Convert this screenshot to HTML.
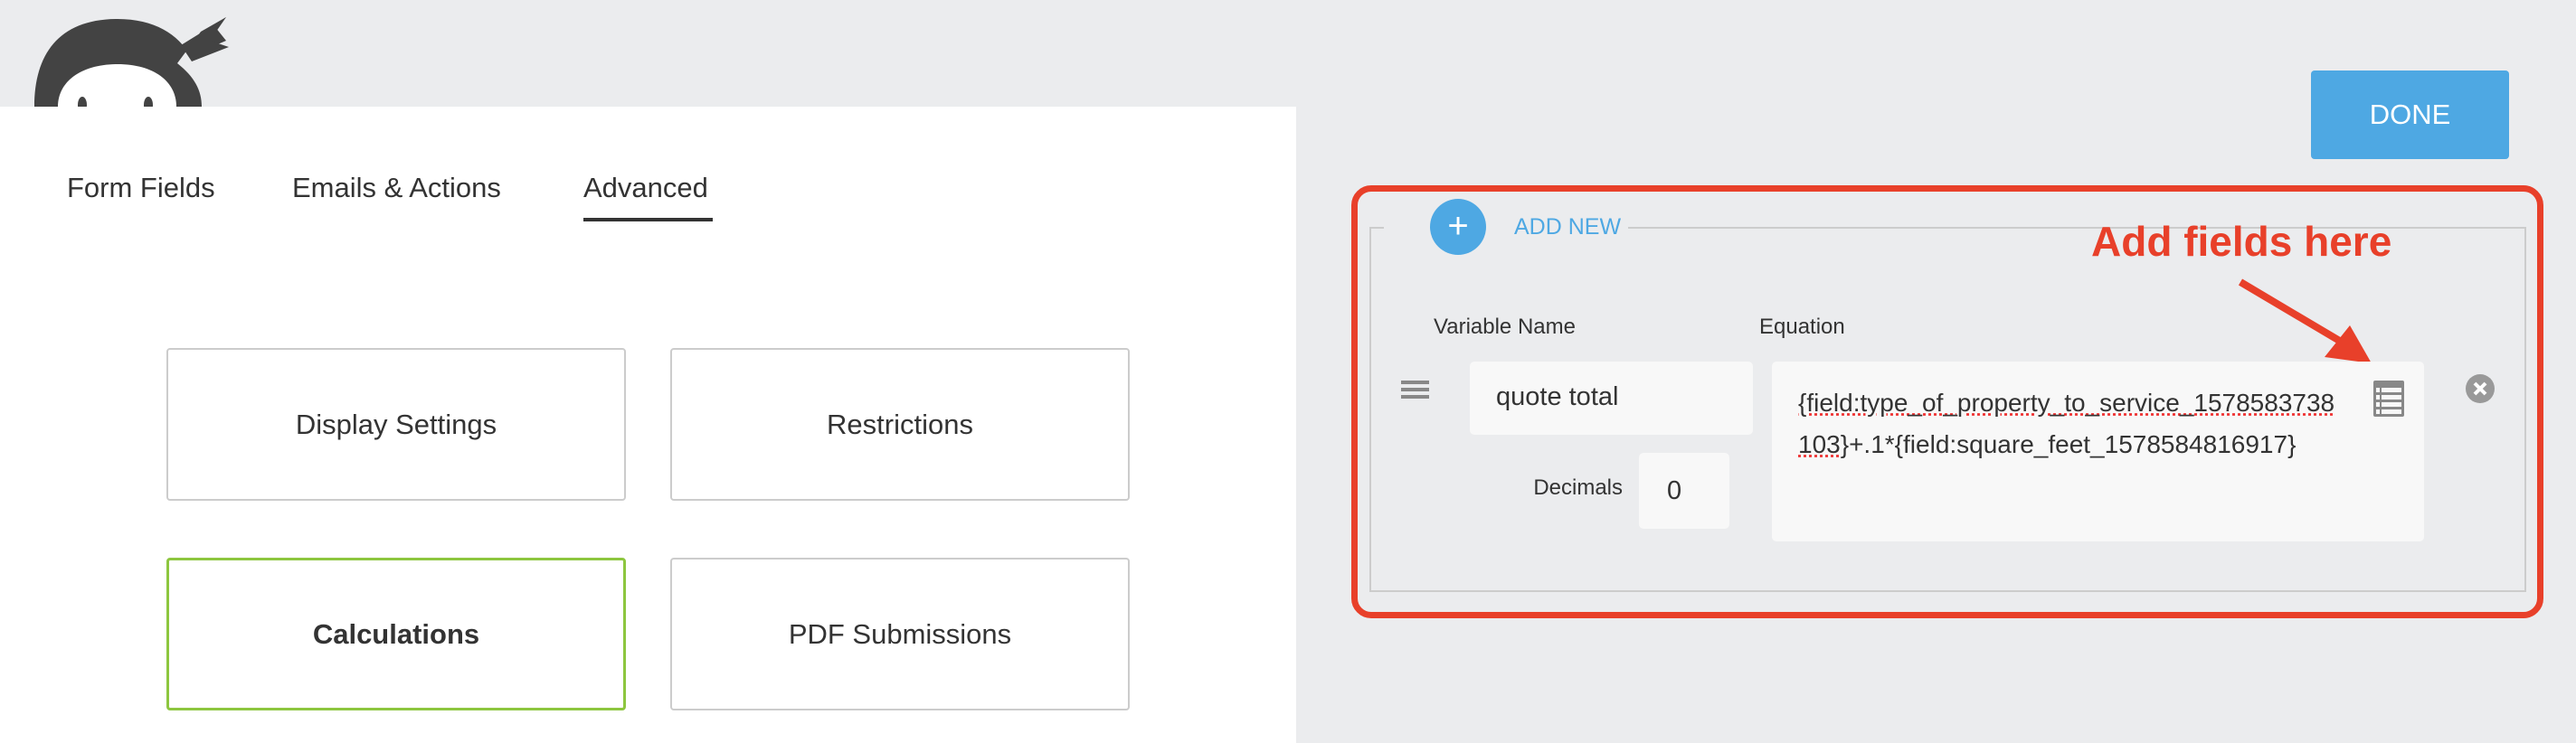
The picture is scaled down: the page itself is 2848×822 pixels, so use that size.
<!DOCTYPE html>
<html><head><meta charset="utf-8"><style>
*{margin:0;padding:0;box-sizing:border-box}
body{width:2848px;height:822px;background:#ebecee;position:relative;overflow:hidden;font-family:"Liberation Sans",sans-serif;color:#333}
.a{position:absolute}
.panel{left:0;top:118px;width:1433px;height:704px;background:#fff}
.tab{top:190px;font-size:31px;color:#333;white-space:nowrap}
.box{width:508px;height:169px;border:2px solid #ccc;border-radius:4px;display:flex;align-items:center;justify-content:center;font-size:31px;color:#333;background:#fff}
.lbl{font-size:24px;color:#333}
.inp{background:#f8f8f8;border-radius:5px}
</style></head><body>
<div class="a panel"></div>
<svg class="a" style="left:0;top:0" width="280" height="118" viewBox="0 0 280 118">
<path d="M38 118 C38 60 65 21 130 21 C170 21 198 38 210 62 L250 45 L238 30 L250 19 L222 35 L196 70 C215 85 223 100 223 118 Z" fill="#434343"/>
<path d="M250 19 L232 45 L253 52 L212 68 L200 50 Z" fill="#434343"/>
<path d="M64 118 C64 90 90 71 130 71 C170 71 195 90 195 118 Z" fill="#fff"/>
<ellipse cx="91" cy="116" rx="5" ry="9" fill="#434343"/>
<ellipse cx="164" cy="116" rx="5" ry="9" fill="#434343"/>
</svg>
<div class="a tab" style="left:74px">Form Fields</div>
<div class="a tab" style="left:323px">Emails &amp; Actions</div>
<div class="a tab" style="left:645px">Advanced</div>
<div class="a" style="left:645px;top:241px;width:143px;height:4px;background:#333"></div>
<div class="a box" style="left:184px;top:385px">Display Settings</div>
<div class="a box" style="left:741px;top:385px">Restrictions</div>
<div class="a box" style="left:184px;top:617px;border:3px solid #8dc63f;font-weight:bold">Calculations</div>
<div class="a box" style="left:741px;top:617px">PDF Submissions</div>

<div class="a" style="left:2555px;top:78px;width:219px;height:98px;background:#4ea8e3;border-radius:4px;color:#fff;font-size:31px;display:flex;align-items:center;justify-content:center">DONE</div>

<div class="a" style="left:1514px;top:251px;width:1279px;height:404px;border:2px solid #ccc"></div>
<div class="a" style="left:1530px;top:240px;width:270px;height:24px;background:#ebecee"></div>
<div class="a" style="left:1581px;top:220px;width:62px;height:62px;border-radius:50%;background:#4ea8e3;color:#fff;font-size:40px;line-height:60px;text-align:center">+</div>
<div class="a" style="left:1674px;top:237px;font-size:25px;color:#4ea8e3">ADD NEW</div>
<div class="a" style="left:2312px;top:240px;font-size:46px;font-weight:bold;color:#e8402a;font-family:'Liberation Sans Narrow','Liberation Sans',sans-serif;white-space:nowrap">Add fields here</div>
<svg class="a" style="left:0;top:0" width="2848" height="822"><line x1="2477" y1="312" x2="2600" y2="385" stroke="#e8402a" stroke-width="8"/><polygon points="2622,402 2570,395 2598,360" fill="#e8402a"/></svg>

<div class="a lbl" style="left:1585px;top:348px">Variable Name</div>
<div class="a lbl" style="left:1945px;top:348px">Equation</div>
<div class="a" style="left:1549px;top:421px;width:31px;height:4px;background:#888;box-shadow:0 8px 0 #888,0 16px 0 #888"></div>
<div class="a inp" style="left:1625px;top:400px;width:313px;height:81px;font-size:29px;padding:23px 0 0 29px">quote total</div>
<div class="a lbl" style="left:1690px;top:526px;width:104px;text-align:right">Decimals</div>
<div class="a inp" style="left:1812px;top:501px;width:100px;height:84px;font-size:29px;padding:26px 0 0 31px">0</div>
<div class="a inp" style="left:1959px;top:400px;width:721px;height:199px;font-size:28px;line-height:46px;padding:23px 0 0 29px">
<span style="text-decoration:underline dotted #e33">{field:type_of_property_to_service_1578583738</span><br><span style="text-decoration:underline dotted #e33">103</span>}+.1*{field:square_feet_1578584816917}</div>
<svg class="a" style="left:2624px;top:421px" width="34" height="40" viewBox="0 0 34 40"><rect x="0" y="0" width="34" height="40" rx="2" fill="#888"/><g fill="#f8f8f8"><rect x="3" y="8" width="4" height="5"/><rect x="9" y="8" width="22" height="5"/><rect x="3" y="16" width="4" height="5"/><rect x="9" y="16" width="22" height="5"/><rect x="3" y="24" width="4" height="5"/><rect x="9" y="24" width="22" height="5"/><rect x="3" y="32" width="4" height="5"/><rect x="9" y="32" width="22" height="5"/></g></svg>
<svg class="a" style="left:2726px;top:414px" width="32" height="32"><circle cx="16" cy="16" r="16" fill="#999"/><path d="M10 10L22 22M22 10L10 22" stroke="#fff" stroke-width="4"/></svg>
<div class="a" style="left:1494px;top:205px;width:1318px;height:479px;border:7px solid #e8402a;border-radius:22px"></div>
</body></html>
